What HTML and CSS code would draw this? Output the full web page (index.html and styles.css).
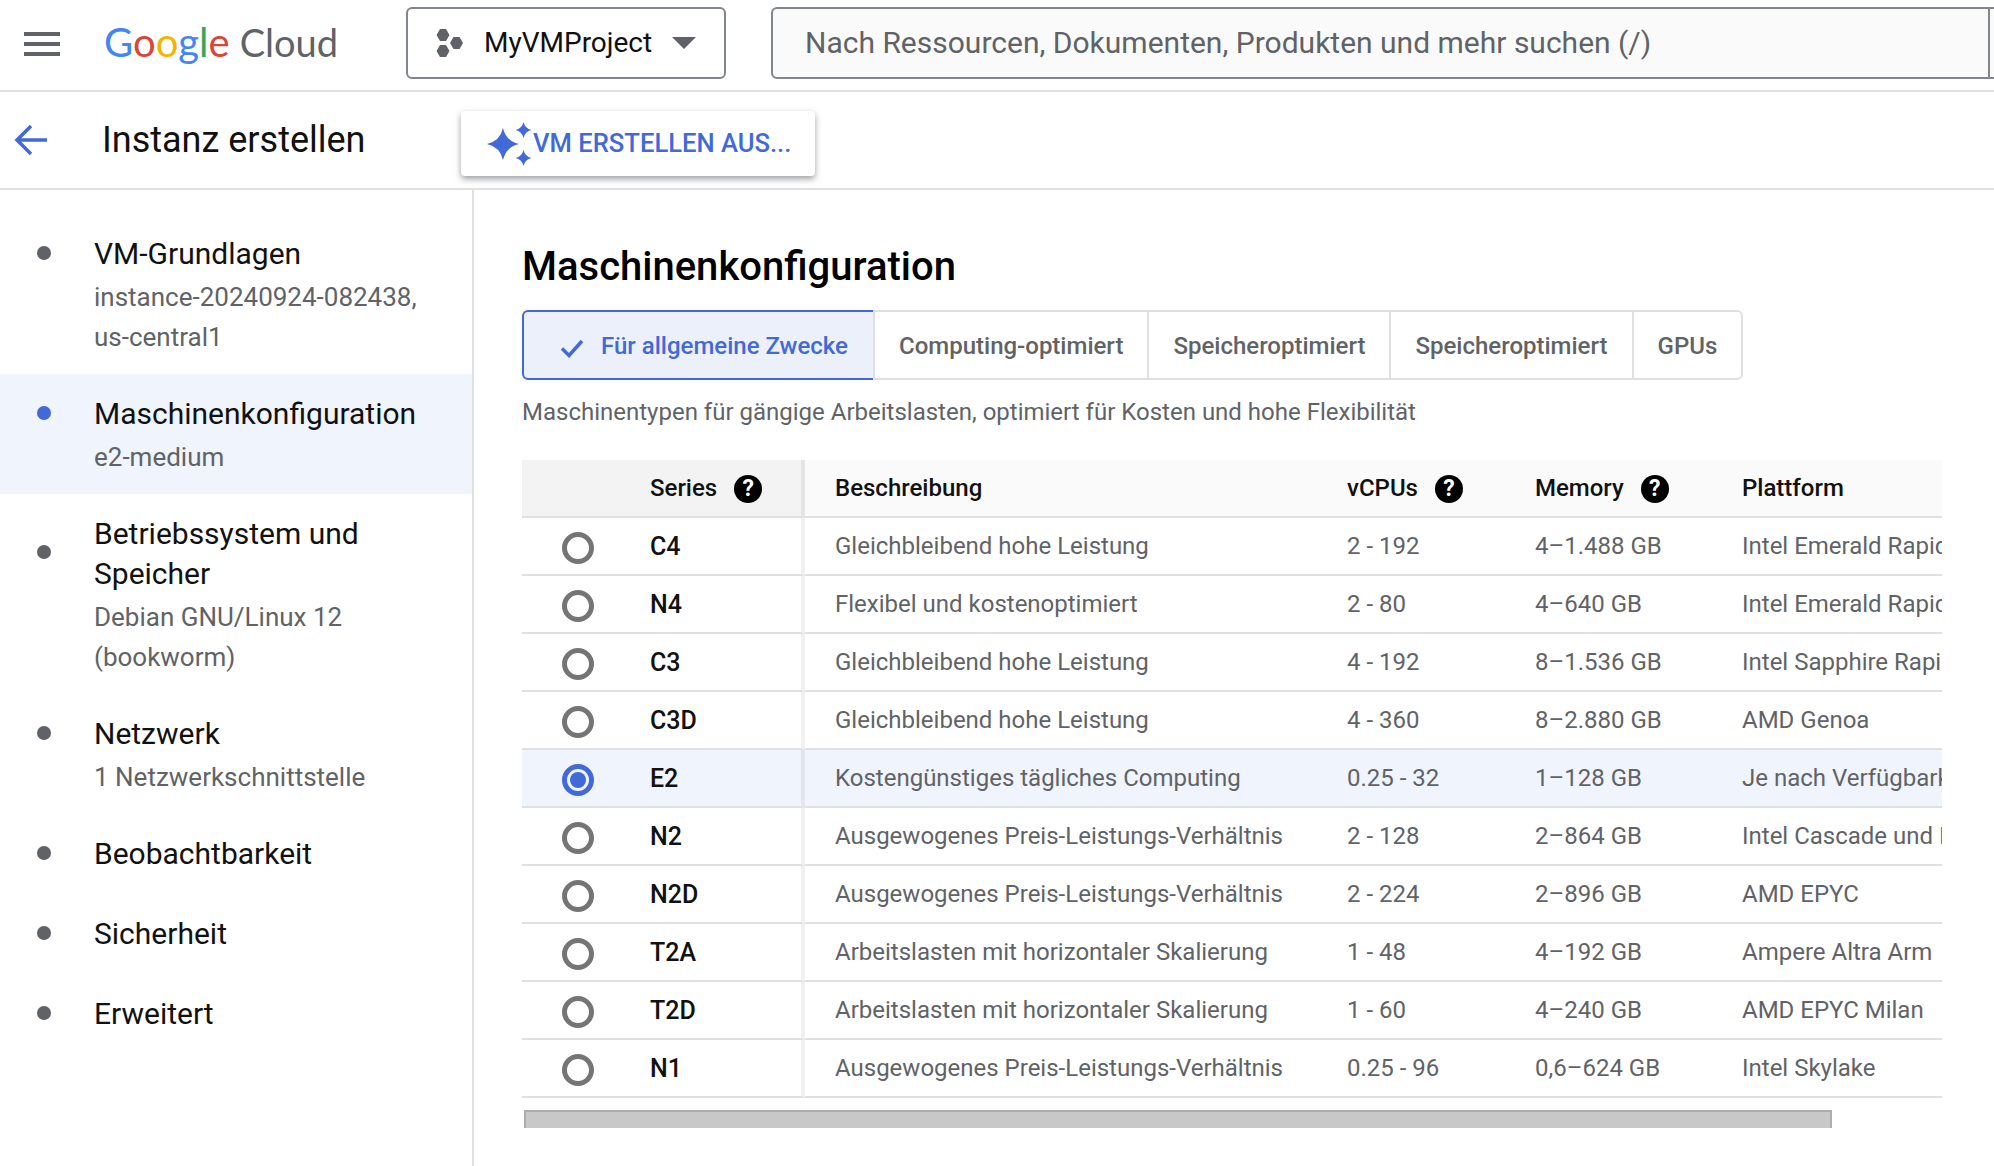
FILE: index.html
```html
<!DOCTYPE html>
<html lang="de">
<head>
    <meta charset="UTF-8">
    <title>Instanz erstellen</title>
    <link rel="stylesheet" href="styles.css">
</head>
<body>

    <header class="topbar">
        <svg class="menu-icon" width="36" height="24" viewBox="0 0 36 24"><path d="M0 0h36v4H0zM0 10h36v4H0zM0 20h36v4H0z" fill="#5f6368"/></svg>
        <div class="logo"><span class="c-blue">G</span><span class="c-red">o</span><span class="c-yellow">o</span><span class="c-blue">g</span><span class="c-green">l</span><span class="c-red">e</span><span class="logo-cloud">Cloud</span></div>
        <button class="project-btn">
            <svg width="28" height="28" viewBox="0 0 28 28"><path d="M4 0h6l3.500 6L10 12H4L.5 6zM17.500 8h6l3.500 6-3.500 6h-6L14 14zM4 16h6l3.500 6-3.500 6H4L.5 22z" fill="#5f6368"/></svg>
            <span>MyVMProject</span>
            <svg class="caret" width="24" height="12" viewBox="0 0 24 12"><path d="M0 0h24L12 12z" fill="#5f6368"/></svg>
        </button>
        <div class="search"><span class="search-text">Nach Ressourcen, Dokumenten, Produkten und mehr suchen (/)</span></div>
    </header>

    <div class="subbar">
        <svg class="back-icon" width="34" height="32" viewBox="0 0 34 32"><path d="M33 16H3M17 2L3 16l14 14" fill="none" stroke="#4169d8" stroke-width="3.500"/></svg>
        <div class="page-title">Instanz erstellen</div>
        <button class="vm-btn">
            <svg width="46" height="46" viewBox="0 0 46 46"><path d="M17 8Q20 21 33 24Q20 27 17 40Q14 27 1 24Q14 21 17 8Z" fill="#4169d8"/><path d="M37.500 2Q39 8.500 45.500 10Q39 11.500 37.500 18Q36 11.500 29.500 10Q36 8.500 37.500 2ZM37.500 30Q39 36.500 45.500 38Q39 39.500 37.500 46Q36 39.500 29.500 38Q36 36.500 37.500 30Z" fill="#4169d8"/></svg>
            <span>VM ERSTELLEN AUS...</span>
        </button>
    </div>

    <div class="layout">
        <nav class="sidebar">
            <div class="step">
                <span class="dot"></span>
                <div>
                    <div class="step-title">VM-Grundlagen</div>
                    <div class="step-sub">instance-20240924-082438,<br>us-central1</div>
                </div>
            </div>
            <div class="step active">
                <span class="dot"></span>
                <div>
                    <div class="step-title">Maschinenkonfiguration</div>
                    <div class="step-sub">e2-medium</div>
                </div>
            </div>
            <div class="step two-line">
                <span class="dot"></span>
                <div>
                    <div class="step-title">Betriebssystem und<br>Speicher</div>
                    <div class="step-sub">Debian GNU/Linux 12<br>(bookworm)</div>
                </div>
            </div>
            <div class="step">
                <span class="dot"></span>
                <div>
                    <div class="step-title">Netzwerk</div>
                    <div class="step-sub">1 Netzwerkschnittstelle</div>
                </div>
            </div>
            <div class="step plain">
                <span class="dot"></span>
                <div class="step-title">Beobachtbarkeit</div>
            </div>
            <div class="step plain">
                <span class="dot"></span>
                <div class="step-title">Sicherheit</div>
            </div>
            <div class="step plain">
                <span class="dot"></span>
                <div class="step-title">Erweitert</div>
            </div>
        </nav>

        <main class="content">
            <h1>Maschinenkonfiguration</h1>

            <div class="tabs">
                <div class="tab selected">
                    <svg width="24" height="20" viewBox="0 0 24 20"><path d="M2 10.500l7 7L22 3" fill="none" stroke="#4169d8" stroke-width="3.500"/></svg>
                    Für allgemeine Zwecke
                </div>
                <div class="tab">Computing-optimiert</div>
                <div class="tab">Speicheroptimiert</div>
                <div class="tab">Speicheroptimiert</div>
                <div class="tab">GPUs</div>
            </div>

            <p class="hint">Maschinentypen für gängige Arbeitslasten, optimiert für Kosten und hohe Flexibilität</p>

            <div class="table-wrap">
                <table>
                    <colgroup>
                        <col class="col-radio">
                        <col class="col-series">
                        <col class="col-desc">
                        <col class="col-cpu">
                        <col class="col-mem">
                        <col class="col-plat">
                    </colgroup>
                    <thead>
                        <tr>
                            <th class="sticky"></th>
                            <th class="sticky"><div class="head-cell">Series<span class="help">?</span></div></th>
                            <th>Beschreibung</th>
                            <th><div class="head-cell">vCPUs<span class="help">?</span></div></th>
                            <th><div class="head-cell">Memory<span class="help">?</span></div></th>
                            <th>Plattform</th>
                        </tr>
                    </thead>
                    <tbody>
                        <tr><td><span class="radio"></span></td><td class="series">C4</td><td>Gleichbleibend hohe Leistung</td><td>2 - 192</td><td>4–1.488 GB</td><td>Intel Emerald Rapids</td></tr>
                        <tr><td><span class="radio"></span></td><td class="series">N4</td><td>Flexibel und kostenoptimiert</td><td>2 - 80</td><td>4–640 GB</td><td>Intel Emerald Rapids</td></tr>
                        <tr><td><span class="radio"></span></td><td class="series">C3</td><td>Gleichbleibend hohe Leistung</td><td>4 - 192</td><td>8–1.536 GB</td><td>Intel Sapphire Rapids</td></tr>
                        <tr><td><span class="radio"></span></td><td class="series">C3D</td><td>Gleichbleibend hohe Leistung</td><td>4 - 360</td><td>8–2.880 GB</td><td>AMD Genoa</td></tr>
                        <tr class="picked"><td><span class="radio on"></span></td><td class="series">E2</td><td>Kostengünstiges tägliches Computing</td><td>0.25 - 32</td><td>1–128 GB</td><td>Je nach Verfügbarkeit</td></tr>
                        <tr><td><span class="radio"></span></td><td class="series">N2</td><td>Ausgewogenes Preis-Leistungs-Verhältnis</td><td>2 - 128</td><td>2–864 GB</td><td>Intel Cascade und Ice Lake</td></tr>
                        <tr><td><span class="radio"></span></td><td class="series">N2D</td><td>Ausgewogenes Preis-Leistungs-Verhältnis</td><td>2 - 224</td><td>2–896 GB</td><td>AMD EPYC</td></tr>
                        <tr><td><span class="radio"></span></td><td class="series">T2A</td><td>Arbeitslasten mit horizontaler Skalierung</td><td>1 - 48</td><td>4–192 GB</td><td>Ampere Altra Arm</td></tr>
                        <tr><td><span class="radio"></span></td><td class="series">T2D</td><td>Arbeitslasten mit horizontaler Skalierung</td><td>1 - 60</td><td>4–240 GB</td><td>AMD EPYC Milan</td></tr>
                        <tr><td><span class="radio"></span></td><td class="series">N1</td><td>Ausgewogenes Preis-Leistungs-Verhältnis</td><td>0.25 - 96</td><td>0,6–624 GB</td><td>Intel Skylake</td></tr>
                    </tbody>
                </table>
            </div>
            <div class="scroll-thumb"></div>
        </main>
    </div>

</body>
</html>
```

FILE: styles.css
```css
* {
    box-sizing: border-box;
}

body {
    margin: 0;
    height: 1166px;
    overflow: hidden;
    background-color: #fff;
    font-family: Roboto, "Liberation Sans", sans-serif;
    color: #111;
}

button {
    font-family: inherit;
    background: #fff;
    cursor: pointer;
}

/* top bar */
.topbar {
    height: 92px;
    display: flex;
    align-items: center;
    padding: 0 0 5px 24px;
    border-bottom: 2px solid #e0e0e0;
    overflow: hidden;
}

.menu-icon {
    flex: none;
    margin-top: 3px;
}

.logo {
    width: 302px;
    flex: none;
    margin: -2px 0 0 44px;
    font-family: Lato, sans-serif;
    font-size: 40px;
    line-height: 50px;
    white-space: nowrap;
}

.c-blue { color: #4285f4; }
.c-red { color: #db4437; }
.c-yellow { color: #f4b400; }
.c-green { color: #34a853; }
.logo-cloud { color: #5f6368; margin-left: 10px; font-size: 38px; }

.project-btn {
    width: 320px;
    height: 72px;
    flex: none;
    display: flex;
    align-items: center;
    padding: 0 0 0 28px;
    border: 2px solid #80868b;
    border-radius: 6px;
    font-size: 28px;
    color: #111;
}

.project-btn span {
    margin-left: 20px;
}

.caret {
    margin-left: 20px;
}

.search {
    width: 1300px;
    height: 72px;
    flex: none;
    margin-left: 45px;
    display: flex;
    align-items: center;
    padding-left: 32px;
    background-color: #fafafa;
    border: 2px solid #80868b;
    border-radius: 6px 0 0 6px;
    font-size: 30px;
    color: #5f6368;
    position: relative;
}

/* inner edge of the search field near the window border */
.search::after {
    content: "";
    position: absolute;
    left: 1215px;
    top: 0;
    bottom: 0;
    width: 2px;
    background-color: #80868b;
}

/* second bar */
.subbar {
    height: 98px;
    display: flex;
    align-items: center;
    padding-left: 14px;
    border-bottom: 2px solid #e0e0e0;
}

.back-icon {
    flex: none;
}

.page-title {
    width: 360px;
    flex: none;
    margin-left: 54px;
    font-size: 36px;
}

.vm-btn {
    width: 354px;
    height: 65px;
    flex: none;
    margin-top: 6px;
    margin-left: -1px;
    display: flex;
    align-items: center;
    padding: 0 0 0 25px;
    border: 0;
    border-radius: 4px;
    box-shadow: 0 3px 6px rgba(60, 64, 67, 0.5);
    color: #4169d8;
    font-size: 25.600px;
    font-weight: 500;
    white-space: nowrap;
}

.vm-btn svg {
    flex: none;
}

.vm-btn span {
    margin-left: 1px;
}

/* page body */
.layout {
    display: flex;
    height: 976px;
}

.sidebar {
    width: 474px;
    flex: none;
    padding-top: 24px;
    border-right: 2px solid #e0e0e0;
}

.step {
    display: flex;
    padding: 20px 0 17px 37px;
}

.step.plain {
    padding-bottom: 20px;
}

.step.active {
    background-color: #f0f4fd;
}

.dot {
    width: 14px;
    height: 14px;
    flex: none;
    margin: 12px 43px 0 0;
    border-radius: 50%;
    background-color: #5f6368;
}

.two-line .dot {
    margin-top: 31px;
}

.active .dot {
    background-color: #4169d8;
}

.step-title {
    font-size: 30px;
    line-height: 40px;
    color: #111;
}

.step-sub {
    margin-top: 3px;
    font-size: 26px;
    line-height: 40px;
    color: #5f6368;
}

.content {
    flex: 1;
    min-width: 0;
    padding: 53px 52px 0 48px;
}

h1 {
    margin: 0 0 19px;
    font-size: 40px;
    line-height: 48px;
    font-weight: 500;
    color: #000;
}

.tabs {
    display: flex;
    height: 70px;
}

.tab {
    height: 70px;
    display: flex;
    align-items: center;
    padding: 1px 24px 0;
    margin-left: -2px;
    border: 2px solid #e0e0e0;
    font-size: 24px;
    font-weight: 500;
    color: #5f6368;
    white-space: nowrap;
}

.tab:last-child {
    border-radius: 0 6px 6px 0;
}

.tab.selected {
    width: 353px;
    margin-left: 0;
    padding-left: 36px;
    border-color: #4169d8;
    border-radius: 6px 0 0 6px;
    background-color: #ecf0fb;
    color: #4169d8;
}

.tab.selected svg {
    margin-right: 17px;
    margin-top: 4px;
}

.hint {
    margin: 12px 0 28px;
    font-size: 24px;
    line-height: 40px;
    color: #5f6368;
}

/* machine table */
.table-wrap {
    overflow: hidden;
}

table {
    width: 1520px;
    table-layout: fixed;
    border-collapse: separate;
    border-spacing: 0;
    font-size: 24px;
}

.col-radio { width: 128px; }
.col-series { width: 155px; }
.col-desc { width: 512px; }
.col-cpu { width: 188px; }
.col-mem { width: 207px; }
.col-plat { width: 330px; }

th {
    height: 58px;
    padding: 0 0 0 30px;
    background-color: #fafafa;
    border-bottom: 2px solid #e0e0e0;
    text-align: left;
    font-weight: 500;
    color: #111;
    white-space: nowrap;
}

th.sticky {
    padding: 0;
    background-color: #f3f3f3;
}

th:nth-child(2) {
    border-right: 4px solid #e4e4e4;
}

td {
    height: 58px;
    padding: 0 0 0 30px;
    border-bottom: 2px solid #e0e0e0;
    color: #5f6368;
    white-space: nowrap;
}

td:first-child {
    padding: 0;
}

td.series {
    padding: 0;
    border-right: 4px solid #f1f1f1;
    color: #111;
    font-size: 25px;
    font-weight: 500;
}

.picked td {
    background-color: #f0f4fd;
}

.picked td.series {
    border-right-color: #e3e6ee;
}

.head-cell {
    display: flex;
    align-items: center;
}

.help {
    width: 28px;
    height: 28px;
    margin: 2px 0 0 17px;
    border-radius: 50%;
    background-color: #000;
    color: #fff;
    font-size: 23px;
    line-height: 28px;
    font-weight: 700;
    text-align: center;
}

.radio {
    display: block;
    width: 32px;
    height: 32px;
    margin: 4px 0 0 40px;
    border: 5px solid #757575;
    border-radius: 50%;
}

.radio.on {
    border-color: #4169d8;
    padding: 3px;
}

.radio.on::before {
    content: "";
    display: block;
    width: 16px;
    height: 16px;
    border-radius: 50%;
    background-color: #4169d8;
}

.scroll-thumb {
    width: 1308px;
    height: 18px;
    margin: 12px 0 0 2px;
    background-color: #c8c8c8;
    border: solid #adadad;
    border-width: 2px 2px 0 2px;
}
```
